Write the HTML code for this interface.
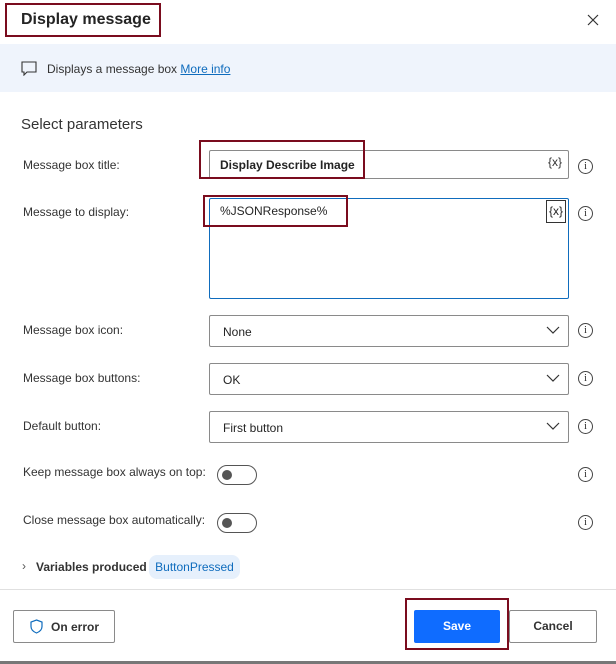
<!DOCTYPE html>
<html><head><style>
*{box-sizing:border-box;margin:0;padding:0}
body{width:616px;height:664px;background:#fff;font-family:"Liberation Sans",sans-serif;color:#242424;position:relative;overflow:hidden;font-size:12px}
.a{position:absolute}
.red{position:absolute;border:2px solid #7a0c1e}
.inp{position:absolute;left:209px;width:360px;border:1px solid #8a8a8a;border-radius:2px;background:#fff}
.lbl{position:absolute;left:23px;font-size:12px;color:#333}
.info{position:absolute;left:578px;width:15px;height:15px;border:1px solid #444;border-radius:50%;font-size:10px;text-align:center;line-height:13px;font-family:"Liberation Serif",serif}
.tog{position:absolute;left:217px;width:40px;height:20px;border:1px solid #555;border-radius:10px}
.tog::after{content:"";position:absolute;left:4px;top:4px;width:10px;height:10px;border-radius:50%;background:#555}
.chev{position:absolute;right:8px;top:9px}
</style></head><body>
<div class="a" style="left:21px;top:11px;font-size:16px;font-weight:bold;color:#242424">Display message</div>
<div class="red" style="left:5px;top:3px;width:156px;height:34px"></div>
<svg class="a" style="left:586px;top:13px" width="14" height="14"><path d="M2 2L12 12M12 2L2 12" stroke="#333" stroke-width="1.2"/></svg>
<div class="a" style="left:0;top:44px;width:616px;height:48px;background:#eff4fc"></div>
<svg class="a" style="left:21px;top:61px" width="17" height="15"><path d="M1 1H15V11H6L3 14V11H1Z" fill="none" stroke="#333" stroke-width="1.1"/></svg>
<div class="a" style="left:47px;top:62px;font-size:12px;color:#333">Displays a message box <span style="color:#0f6cbd;text-decoration:underline">More info</span></div>
<div class="a" style="left:21px;top:116px;font-size:15px;color:#333">Select parameters</div>

<div class="lbl" style="top:158px">Message box title:</div>
<div class="inp" style="top:150px;height:29px"></div>
<div class="a" style="left:220px;top:158px;font-weight:bold;font-size:12px">Display Describe Image</div>
<div class="a" style="left:548px;top:155px;font-size:12px;color:#333">{x}</div>
<div class="red" style="left:199px;top:140px;width:166px;height:39px"></div>
<div class="info" style="top:159px">i</div>

<div class="lbl" style="top:205px">Message to display:</div>
<div class="inp" style="top:198px;height:101px;border-color:#0f6cbd"></div>
<div class="a" style="left:220px;top:204px;font-size:12px">%JSONResponse%</div>
<div class="a" style="left:546px;top:200px;width:20px;height:23px;border:1px solid #333;font-size:12px;text-align:center;line-height:21px">{x}</div>
<div class="red" style="left:203px;top:195px;width:145px;height:32px"></div>
<div class="info" style="top:206px">i</div>

<div class="lbl" style="top:323px">Message box icon:</div>
<div class="inp" style="top:315px;height:32px"><span class="a" style="left:13px;top:9px">None</span><svg class="chev" width="14" height="10"><path d="M1 2L7 8L13 2" fill="none" stroke="#333" stroke-width="1.2"/></svg></div>
<div class="info" style="top:323px">i</div>
<div class="lbl" style="top:371px">Message box buttons:</div>
<div class="inp" style="top:363px;height:32px"><span class="a" style="left:13px;top:9px">OK</span><svg class="chev" width="14" height="10"><path d="M1 2L7 8L13 2" fill="none" stroke="#333" stroke-width="1.2"/></svg></div>
<div class="info" style="top:371px">i</div>
<div class="lbl" style="top:419px">Default button:</div>
<div class="inp" style="top:411px;height:32px"><span class="a" style="left:13px;top:9px">First button</span><svg class="chev" width="14" height="10"><path d="M1 2L7 8L13 2" fill="none" stroke="#333" stroke-width="1.2"/></svg></div>
<div class="info" style="top:419px">i</div>

<div class="lbl" style="top:465px">Keep message box always on top:</div>
<div class="tog" style="top:465px"></div>
<div class="info" style="top:467px">i</div>
<div class="lbl" style="top:513px">Close message box automatically:</div>
<div class="tog" style="top:513px"></div>
<div class="info" style="top:515px">i</div>

<div class="a" style="left:22px;top:559px;font-size:12px;color:#555">›</div>
<div class="a" style="left:36px;top:560px;font-weight:bold;font-size:12px;color:#333">Variables produced</div>
<div class="a" style="left:149px;top:555px;width:91px;height:24px;border-radius:8px;background:#e6f0fc;color:#0f6cbd;font-size:12px;text-align:center;line-height:24px">ButtonPressed</div>

<div class="a" style="left:0;top:589px;width:616px;height:1px;background:#e0e0e0"></div>
<div class="a" style="left:13px;top:610px;width:102px;height:33px;border:1px solid #8a8a8a;border-radius:2px"></div>
<svg class="a" style="left:30px;top:619px" width="13" height="15"><path d="M6.5 1L12 3V7.5C12 11 9 13 6.5 14C4 13 1 11 1 7.5V3Z" fill="none" stroke="#0f6cbd" stroke-width="1.2"/></svg>
<div class="a" style="left:51px;top:620px;font-size:12px;font-weight:bold;color:#333">On error</div>
<div class="a" style="left:414px;top:610px;width:86px;height:33px;background:#0f6cff;border-radius:2px;color:#fff;font-weight:bold;font-size:12px;text-align:center;line-height:33px">Save</div>
<div class="red" style="left:405px;top:598px;width:104px;height:52px"></div>
<div class="a" style="left:509px;top:610px;width:88px;height:33px;border:1px solid #8a8a8a;border-radius:2px;text-align:center;line-height:31px;font-weight:bold;font-size:12px;color:#333">Cancel</div>
<div class="a" style="left:0;top:661px;width:616px;height:3px;background:#777"></div>
</body></html>
